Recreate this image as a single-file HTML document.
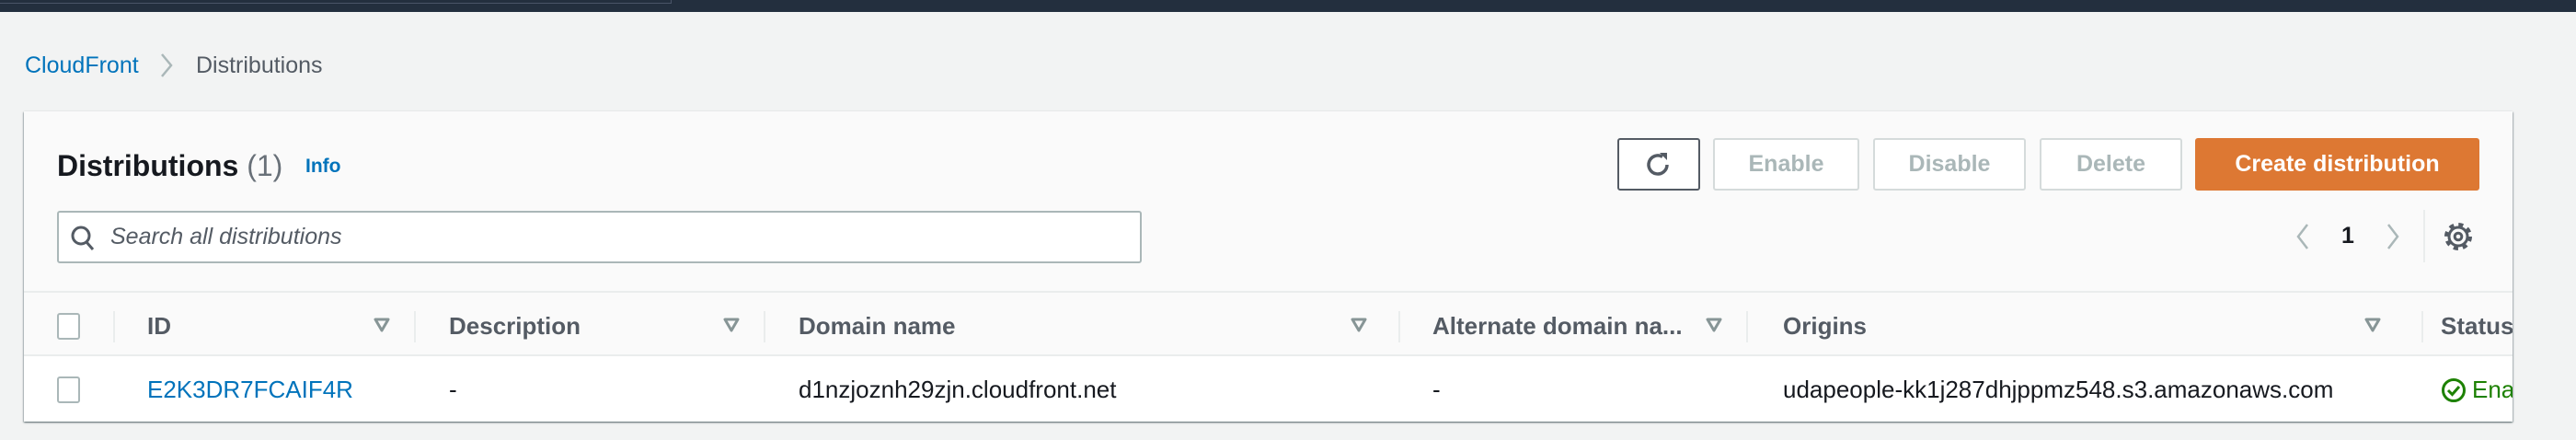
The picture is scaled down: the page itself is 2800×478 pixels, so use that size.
<!DOCTYPE html>
<html><head><meta charset="utf-8"><style>
*{box-sizing:border-box;margin:0;padding:0}
body{width:2800px;height:478px;background:#f2f3f3;font-family:"Liberation Sans",sans-serif;color:#16191f;position:relative;overflow:hidden}
.abs{position:absolute}
.top{left:0;top:0;width:2800px;height:13px;background:#232f3e}
.topin{left:0;top:0;width:730px;height:4px;border-bottom:1px solid #4a5568;border-right:1px solid #4a5568}
.bc{top:56px;font-size:25px;line-height:30px}
.panel{left:26px;top:121px;width:2705px;height:337px;background:#fafafa;box-shadow:0 1px 2px rgba(0,28,36,.5),1px 1px 1px rgba(0,28,36,.15),-1px 1px 1px rgba(0,28,36,.15);overflow:hidden}
.btn{top:29px;height:57px;border:2px solid #d5dbdb;border-radius:3px;background:#fff;color:#aab7b8;font-weight:bold;font-size:25px;display:flex;align-items:center;justify-content:center}
.hdr{left:0;top:195px;width:2705px;height:71px;border-top:2px solid #eaeded;border-bottom:2px solid #eaeded}
.row{left:0;top:266px;width:2705px;height:71px;background:#fff}
.th{top:21px;font-size:26px;font-weight:bold;color:#545b64;white-space:nowrap}
.td{top:21px;font-size:26px;white-space:nowrap}
.div{top:20px;width:2px;height:34px;background:#eaeded}
.cb{width:25px;height:29px;border:2px solid #aab7b8;border-radius:3px;background:#fff}
.tri{top:26px}
</style></head><body>
<div class="abs top"></div><div class="abs topin"></div>
<div class="abs bc" style="left:27px;color:#0073bb">CloudFront</div>
<svg class="abs" style="left:172px;top:57px" width="18" height="28"><path d="M4 2 L14 14 L4 26" fill="none" stroke="#aab7b8" stroke-width="2.5"/></svg>
<div class="abs bc" style="left:213px;color:#545b64">Distributions</div>

<div class="abs panel">
 <div class="abs" style="left:36px;top:39px;font-size:32px;font-weight:bold;line-height:40px">Distributions <span style="font-weight:normal;color:#687078">(1)</span></div>
 <div class="abs" style="left:306px;top:48px;font-size:21px;font-weight:bold;color:#0073bb">Info</div>

 <div class="abs btn" style="left:1732px;width:90px;border-color:#545b64">
  <svg width="32" height="32" viewBox="0 0 32 32"><path d="M25 16 A10 10 0 1 1 20 7.3" fill="none" stroke="#545b64" stroke-width="3.5"/><path d="M17 3 L25 3 L25 11 Z" fill="#545b64"/></svg></div>
 <div class="abs btn" style="left:1836px;width:159px">Enable</div>
 <div class="abs btn" style="left:2010px;width:166px">Disable</div>
 <div class="abs btn" style="left:2191px;width:155px">Delete</div>
 <div class="abs btn" style="left:2360px;width:309px;background:#dd7833;border-color:#dd7833;color:#fff">Create distribution</div>

 <div class="abs" style="left:36px;top:108px;width:1179px;height:57px;border:2px solid #aab7b8;border-radius:3px;background:#fff"></div>
 <svg class="abs" style="left:50px;top:123px" width="28" height="30"><circle cx="12" cy="12" r="9" fill="none" stroke="#545b64" stroke-width="3"/><path d="M18 19 L25 27" stroke="#545b64" stroke-width="3"/></svg>
 <div class="abs" style="left:94px;top:122px;font-size:25px;font-style:italic;color:#545b64">Search all distributions</div>

 <svg class="abs" style="left:2467px;top:120px" width="20" height="32"><path d="M15 3 L5 16 L15 29" fill="none" stroke="#aab7b8" stroke-width="2.5"/></svg>
 <div class="abs" style="left:2519px;top:121px;font-size:25px;font-weight:bold">1</div>
 <svg class="abs" style="left:2565px;top:120px" width="20" height="32"><path d="M5 3 L15 16 L5 29" fill="none" stroke="#aab7b8" stroke-width="2.5"/></svg>
 <div class="abs" style="left:2608px;top:107px;width:2px;height:57px;background:#eaeded"></div>
 <svg class="abs" style="left:2630px;top:120px" width="32" height="32" viewBox="0 0 32 32">
  <circle cx="16" cy="16" r="12.5" fill="none" stroke="#545b64" stroke-width="5" stroke-dasharray="4.9 4.9"/>
  <circle cx="16" cy="16" r="10" fill="none" stroke="#545b64" stroke-width="3"/>
  <circle cx="16" cy="16" r="3.8" fill="none" stroke="#545b64" stroke-width="3"/>
 </svg>

 <div class="abs hdr">
  <div class="abs cb" style="left:36px;top:22px"></div>
  <div class="abs div" style="left:97px"></div>
  <div class="abs th" style="left:134px">ID</div>
  <svg class="abs tri" style="left:380px" width="18" height="18"><path d="M2 3h14L9 15z" fill="none" stroke="#879596" stroke-width="3" stroke-linejoin="round"/></svg>
  <div class="abs div" style="left:424px"></div>
  <div class="abs th" style="left:462px">Description</div>
  <svg class="abs tri" style="left:760px" width="18" height="18"><path d="M2 3h14L9 15z" fill="none" stroke="#879596" stroke-width="3" stroke-linejoin="round"/></svg>
  <div class="abs div" style="left:804px"></div>
  <div class="abs th" style="left:842px">Domain name</div>
  <svg class="abs tri" style="left:1442px" width="18" height="18"><path d="M2 3h14L9 15z" fill="none" stroke="#879596" stroke-width="3" stroke-linejoin="round"/></svg>
  <div class="abs div" style="left:1494px"></div>
  <div class="abs th" style="left:1531px">Alternate domain na...</div>
  <svg class="abs tri" style="left:1828px" width="18" height="18"><path d="M2 3h14L9 15z" fill="none" stroke="#879596" stroke-width="3" stroke-linejoin="round"/></svg>
  <div class="abs div" style="left:1872px"></div>
  <div class="abs th" style="left:1912px">Origins</div>
  <svg class="abs tri" style="left:2544px" width="18" height="18"><path d="M2 3h14L9 15z" fill="none" stroke="#879596" stroke-width="3" stroke-linejoin="round"/></svg>
  <div class="abs div" style="left:2606px"></div>
  <div class="abs th" style="left:2627px">Status</div>
 </div>
 <div class="abs row">
  <div class="abs cb" style="left:36px;top:22px"></div>
  <div class="abs td" style="left:134px;color:#0073bb">E2K3DR7FCAIF4R</div>
  <div class="abs td" style="left:462px">-</div>
  <div class="abs td" style="left:842px">d1nzjoznh29zjn.cloudfront.net</div>
  <div class="abs td" style="left:1531px">-</div>
  <div class="abs td" style="left:1912px">udapeople-kk1j287dhjppmz548.s3.amazonaws.com</div>
  <svg class="abs" style="left:2627px;top:23px" width="28" height="28"><circle cx="14" cy="14" r="11.5" fill="none" stroke="#1d8102" stroke-width="3"/><path d="M8 14l4.5 4.5L20 10" fill="none" stroke="#1d8102" stroke-width="3"/></svg>
  <div class="abs td" style="left:2661px;color:#1d8102">Enabled</div>
 </div>
</div>
</body></html>
